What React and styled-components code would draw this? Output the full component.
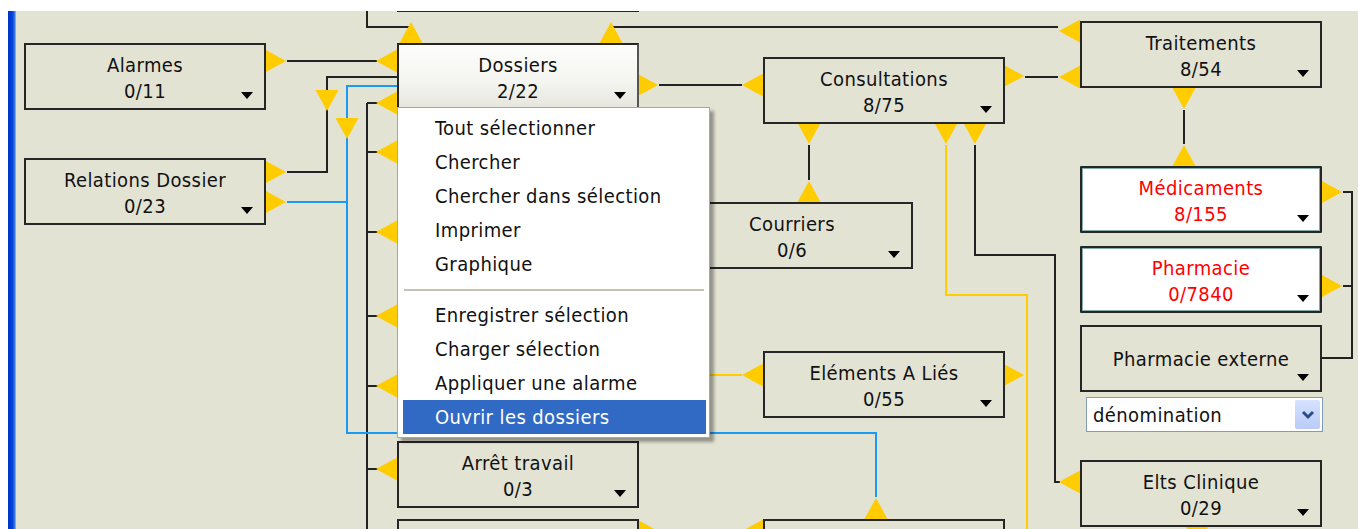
import React from 'react';
import styled, { createGlobalStyle, css } from 'styled-components';

// page offset of the canvas (white strip on top, blue bar on the left)
const OX = 16;
const OY = 11;

const FONT = `"DejaVu Sans Condensed", "DejaVu Sans", "Liberation Sans", sans-serif`;

const nodes = [
  { id: 'top', x: 397, y: -55 },
  { id: 'alarmes', x: 24, y: 43, title: 'Alarmes', count: '0/11' },
  { id: 'relations', x: 24, y: 158, title: 'Relations Dossier', count: '0/23' },
  { id: 'dossiers', x: 397, y: 43, title: 'Dossiers', count: '2/22', pressed: true },
  { id: 'consult', x: 763, y: 57, title: 'Consultations', count: '8/75' },
  { id: 'traitements', x: 1080, y: 21, title: 'Traitements', count: '8/54' },
  { id: 'medic', x: 1080, y: 166, title: 'Médicaments', count: '8/155', active: true },
  { id: 'pharma', x: 1080, y: 246, title: 'Pharmacie', count: '0/7840', active: true },
  { id: 'pharmaext', x: 1080, y: 325, title: 'Pharmacie externe' },
  { id: 'elts', x: 1080, y: 460, title: 'Elts Clinique', count: '0/29' },
  { id: 'courriers', x: 671, y: 202, title: 'Courriers', count: '0/6' },
  { id: 'elements', x: 763, y: 351, title: 'Eléments A Liés', count: '0/55' },
  { id: 'arret', x: 397, y: 441, title: 'Arrêt travail', count: '0/3' },
  { id: 'bottom1', x: 397, y: 519 },
  { id: 'bottom2', x: 763, y: 519 },
];

const blackWires = [
  '367,0 367,27 411,27',
  '611,27 1058,27',
  '287,61 377,61',
  '287,172 327,172 327,77 397,77',
  '659,85 742,85',
  '1025,77 1058,77',
  '809,145 809,180',
  '975,145 975,255 1055,255 1055,482 1060,482',
  '1184,110 1184,144',
  '1343,192 1352,192 1352,358 1321,358',
  '1343,286 1352,286',
  '367,103 367,540',
];
const busStubs = [103, 152, 232, 316, 386, 469];

const blueWires = [
  '287,202 347,202',
  '397,86 347,86 347,433 876,433 876,497',
];

const yellowWires = [
  '946,145 946,295 1027,295 1027,540',
  '742,375 700,375',
];

const ports = [
  // right
  [265, 61, 'r'], [265, 172, 'r'], [265, 202, 'r'], [637, 85, 'r'], [1003, 76, 'r'],
  [1321, 192, 'r'], [1321, 286, 'r'], [1003, 375, 'r'], [637, 531, 'r'],
  // left
  [397, 61, 'l'], [763, 85, 'l'], [1080, 31, 'l'], [1080, 77, 'l'], [763, 375, 'l'],
  [1080, 482, 'l'], [763, 531, 'l'],
  ...busStubs.map((y) => [397, y, 'l']),
  // up
  [411, 43, 'u'], [611, 43, 'u'], [809, 202, 'u'], [1184, 166, 'u'], [876, 519, 'u'],
  // down
  [809, 123, 'd'], [946, 123, 'd'], [975, 123, 'd'], [1184, 88, 'd'], [1197, 526, 'd'],
  [327, 90, 'd'], [347, 118, 'd'],
];

const tri = (x, y, d) => {
  const h = 11.5;
  const l = 21;
  if (d === 'r') return `${x},${y - h} ${x + l},${y} ${x},${y + h}`;
  if (d === 'l') return `${x},${y - h} ${x - l},${y} ${x},${y + h}`;
  if (d === 'u') return `${x - h},${y} ${x},${y - l} ${x + h},${y}`;
  return `${x - h},${y} ${x},${y + l} ${x + h},${y}`;
};

const menuItems = [
  'Tout sélectionner',
  'Chercher',
  'Chercher dans sélection',
  'Imprimer',
  'Graphique',
  '-',
  'Enregistrer sélection',
  'Charger sélection',
  'Appliquer une alarme',
  'Ouvrir les dossiers',
];

function App() {
  return (
    <>
      <GlobalStyle />
      <Page>
        <BlueBar />
        <Canvas>
          <Wires viewBox={`${OX} ${OY} 1342 518`}>
            {blackWires.map((p) => (
              <polyline key={p} points={p} stroke="#222" />
            ))}
            {busStubs.map((y) => (
              <polyline key={y} points={`367,${y} 378,${y}`} stroke="#222" />
            ))}
            {blueWires.map((p) => (
              <polyline key={p} points={p} stroke="#1a9af2" />
            ))}
            {yellowWires.map((p) => (
              <polyline key={p} points={p} stroke="#ffcc00" />
            ))}
            {ports.map(([x, y, d], i) => (
              <polygon key={i} points={tri(x, y, d)} fill="#ffcc00" />
            ))}
          </Wires>

          {nodes.map((n) => (
            <Node key={n.id} $x={n.x} $y={n.y} $pressed={n.pressed} $active={n.active} $single={!n.count}>
              {n.title && <Title>{n.title}</Title>}
              {n.count && <Title>{n.count}</Title>}
              {n.title && <Caret />}
            </Node>
          ))}

          <Combo>
            <span>dénomination</span>
            <ComboButton>
              <svg width="16" height="12" viewBox="0 0 16 12">
                <path d="M3 3 L8 8 L13 3" fill="none" stroke="#2d4c8c" strokeWidth="3" />
              </svg>
            </ComboButton>
          </Combo>

          <Menu>
            {menuItems.map((m) =>
              m === '-' ? (
                <Separator key="sep" />
              ) : (
                <MenuItem key={m} $active={m === 'Ouvrir les dossiers'}>
                  {m}
                </MenuItem>
              )
            )}
          </Menu>
        </Canvas>
      </Page>
    </>
  );
}

const GlobalStyle = createGlobalStyle`
  html, body {
    margin: 0;
    background: #fff;
    overflow: hidden;
  }
`;

const Page = styled.div`
  display: flex;
  height: 529px;
  padding: ${OY}px 0 0 8px;
  box-sizing: border-box;
  font-family: ${FONT};
  letter-spacing: 0.4px;
  color: #111;
`;

const BlueBar = styled.div`
  width: 8px;
  flex-shrink: 0;
  background: linear-gradient(to right, #0033c4, #0044dc 55%, #2f6fe0 80%, #9fc0ee);
`;

const Canvas = styled.div`
  position: relative;
  flex: 1;
  overflow: hidden;
  background: #e3e3d4;
`;

const Wires = styled.svg`
  position: absolute;
  left: 0;
  top: 0;
  width: 1342px;
  height: 518px;
  shape-rendering: crispEdges;

  polyline {
    fill: none;
    stroke-width: 2;
  }
  polygon {
    shape-rendering: auto;
  }
`;

const Node = styled.div`
  position: absolute;
  left: ${(p) => p.$x - OX}px;
  top: ${(p) => p.$y - OY}px;
  width: 242px;
  height: 67px;
  box-sizing: border-box;
  border: 2px solid #262626;
  background: #e3e3d4;
  padding-top: ${(p) => (p.$single ? 19 : 7)}px;
  text-align: center;
  font-size: 20px;
  line-height: 26px;

  ${(p) =>
    p.$pressed &&
    css`
      background: linear-gradient(#fdfdfb, #f4f4f0 60%, #e6e6de);
      border-right-color: #555;
    `}

  ${(p) =>
    p.$active &&
    css`
      background: #fff;
      color: #ff0000;
      box-shadow: inset 0 0 0 1px #86aaa8;
      border-radius: 1px;
    `}
`;

const Title = styled.div`
  white-space: nowrap;
`;

const Caret = styled.span`
  position: absolute;
  right: 11px;
  bottom: 9px;
  width: 0;
  height: 0;
  border-left: 6px solid transparent;
  border-right: 6px solid transparent;
  border-top: 7px solid #000;
`;

const Combo = styled.div`
  position: absolute;
  left: ${1086 - OX}px;
  top: ${397 - OY}px;
  width: 237px;
  height: 35px;
  box-sizing: border-box;
  border: 1px solid #7f9db9;
  background: #fff;
  display: flex;
  align-items: center;
  justify-content: space-between;
  padding: 0 2px 0 6px;
  font-size: 20px;
  color: #111;
`;

const ComboButton = styled.div`
  width: 25px;
  height: 29px;
  border-radius: 2px;
  background: linear-gradient(#d6e2fe, #b9cbf8);
  display: flex;
  align-items: center;
  justify-content: center;
`;

const Menu = styled.ul`
  position: absolute;
  left: ${397 - OX}px;
  top: ${107 - OY}px;
  width: 313px;
  margin: 0;
  padding: 3px 3px 3px 5px;
  box-sizing: border-box;
  list-style: none;
  background: #fff;
  border: 1px solid #aca899;
  box-shadow: 4px 4px 3px rgba(0, 0, 0, 0.35);
  font-size: 20px;
`;

const MenuItem = styled.li`
  height: 34px;
  line-height: 34px;
  padding-left: 32px;
  white-space: nowrap;
  color: ${(p) => (p.$active ? '#fff' : '#111')};
  background: ${(p) => (p.$active ? '#316ac5' : 'transparent')};
`;

const Separator = styled.li`
  height: 17px;
  display: flex;
  align-items: center;
  padding: 0 2px 0 1px;

  &::after {
    content: '';
    flex: 1;
    height: 2px;
    background: #c5c2b2;
  }
`;

export default App;
